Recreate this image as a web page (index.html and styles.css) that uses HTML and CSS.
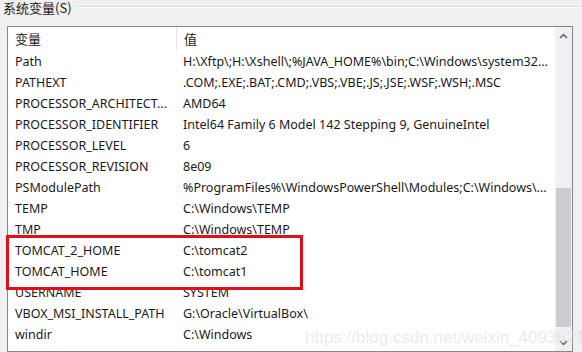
FILE: index.html
```html
<!DOCTYPE html>
<html>
<head>
<meta charset="utf-8">
<link rel="stylesheet" href="styles.css">
</head>
<body>
<div class="group">
  <div class="legend"><span class="legend-text">系统变量(S)</span><span class="legend-line"></span></div>
  <div class="listview">
    <div class="list">
      <div class="header">
        <div class="hcell name">变量</div>
        <div class="hcell value">值</div>
      </div>
      <div class="rows">
        <div class="row"><div class="cell name">Path</div><div class="cell value">H:\Xftp\;H:\Xshell\;%JAVA_HOME%\bin;C:\Windows\system32...</div></div>
        <div class="row"><div class="cell name">PATHEXT</div><div class="cell value">.COM;.EXE;.BAT;.CMD;.VBS;.VBE;.JS;.JSE;.WSF;.WSH;.MSC</div></div>
        <div class="row"><div class="cell name">PROCESSOR_ARCHITECT...</div><div class="cell value">AMD64</div></div>
        <div class="row"><div class="cell name">PROCESSOR_IDENTIFIER</div><div class="cell value">Intel64 Family 6 Model 142 Stepping 9, GenuineIntel</div></div>
        <div class="row"><div class="cell name">PROCESSOR_LEVEL</div><div class="cell value">6</div></div>
        <div class="row"><div class="cell name">PROCESSOR_REVISION</div><div class="cell value">8e09</div></div>
        <div class="row"><div class="cell name">PSModulePath</div><div class="cell value">%ProgramFiles%\WindowsPowerShell\Modules;C:\Windows\...</div></div>
        <div class="row"><div class="cell name">TEMP</div><div class="cell value">C:\Windows\TEMP</div></div>
        <div class="row"><div class="cell name">TMP</div><div class="cell value">C:\Windows\TEMP</div></div>
        <div class="row"><div class="cell name">TOMCAT_2_HOME</div><div class="cell value">C:\tomcat2</div></div>
        <div class="row"><div class="cell name">TOMCAT_HOME</div><div class="cell value">C:\tomcat1</div></div>
        <div class="row"><div class="cell name">USERNAME</div><div class="cell value">SYSTEM</div></div>
        <div class="row"><div class="cell name">VBOX_MSI_INSTALL_PATH</div><div class="cell value">G:\Oracle\VirtualBox\</div></div>
        <div class="row"><div class="cell name">windir</div><div class="cell value">C:\Windows</div></div>
      </div>
    </div>
    <div class="scrollbar">
      <div class="arrow up"><svg width="9" height="6" viewBox="0 0 9 6"><path d="M1 5 L4.5 1.5 L8 5" fill="none" stroke="#606060" stroke-width="1.5"/></svg></div>
      <div class="track"><div class="thumb"></div></div>
      <div class="arrow down"><svg width="9" height="6" viewBox="0 0 9 6"><path d="M1 1 L4.5 4.5 L8 1" fill="none" stroke="#606060" stroke-width="1.5"/></svg></div>
    </div>
    <div class="highlight"></div>
  </div>
</div>
<div class="watermark">https://blog.csdn.net/weixin_40936211</div>
</body>
</html>
```
FILE: styles.css
```css
html, body {
  margin: 0;
  padding: 0;
}
body {
  width: 582px;
  height: 352px;
  overflow: hidden;
  background: #f0f0f0;
  font-family: "Noto Sans", "Noto Sans CJK SC", sans-serif;
  font-size: 12.5px;
  color: #1a1a1a;
  position: relative;
}
.group {
  padding: 0 0 0 7px;
}
.legend {
  display: flex;
  align-items: flex-start;
  height: 26px;
  margin-left: -4px;
}
.legend-text {
  font-family: "Noto Sans CJK SC", sans-serif;
  font-size: 13px;
  line-height: 15px;
  padding-right: 4px;
  color: #1a1a1a;
}
.legend-line {
  flex: 1;
  height: 0;
  border-top: 1px solid #dcdcdc;
  border-bottom: 1px solid #ffffff;
  margin-top: 6px;
}
.listview {
  position: relative;
  width: 564px;
  height: 324px;
  border: 1px solid #828790;
  background: #ffffff;
  display: flex;
}
.list {
  flex: 1;
  display: flex;
  flex-direction: column;
  overflow: hidden;
}
.header {
  display: flex;
  height: 23px;
  flex: none;
}
.hcell {
  font-family: "Noto Sans CJK SC", sans-serif;
  font-size: 13px;
  line-height: 23px;
  padding-left: 7px;
  white-space: nowrap;
}
.hcell.name {
  width: 161px;
  border-right: 1px solid #e5e5e5;
}
.rows {
  display: flex;
  flex-direction: column;
  padding-top: 1px;
}
.row {
  display: flex;
  height: 21px;
  line-height: 21px;
  white-space: nowrap;
  flex: none;
}
.cell {
  padding-left: 7px;
  overflow: hidden;
}
.cell.name {
  width: 161px;
  flex: none;
}
.cell.value {
  flex: 1;
}
.scrollbar {
  width: 17px;
  flex: none;
  background: #f0f0f0;
  display: flex;
  flex-direction: column;
}
.arrow {
  height: 17px;
  display: flex;
  align-items: center;
  justify-content: center;
}
.track {
  flex: 1;
  display: flex;
  flex-direction: column;
  justify-content: flex-end;
}
.thumb {
  height: 139px;
  margin: 0 1px 7px 1px;
  background: #cdcdcd;
}
.highlight {
  position: absolute;
  left: -2px;
  top: 208px;
  width: 291px;
  height: 49px;
  border: 3px solid #e0101a;
}
.watermark {
  position: absolute;
  left: 305px;
  top: 328px;
  font-family: "Liberation Sans", sans-serif;
  font-size: 17px;
  color: rgba(225, 225, 225, 0.7);
  white-space: nowrap;
}
```
